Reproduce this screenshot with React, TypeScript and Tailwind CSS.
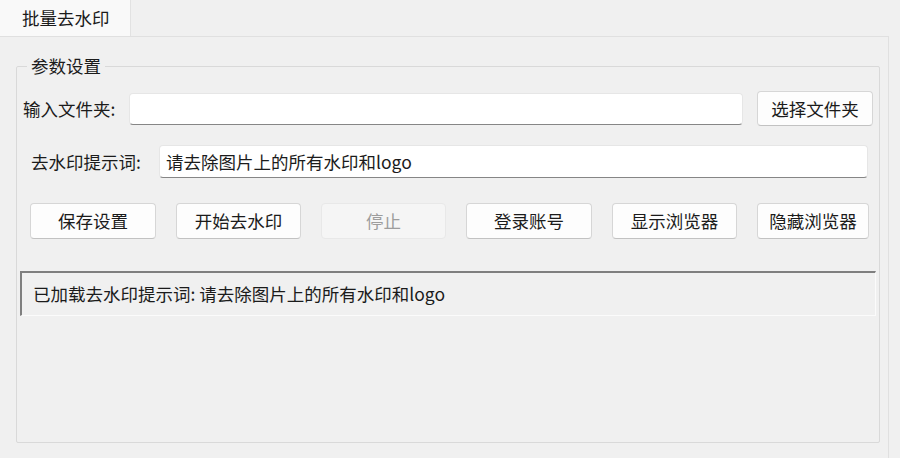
import React from 'react';

const font = { fontFamily: '"Microsoft YaHei", "Noto Sans CJK SC", "Noto Sans", sans-serif' };

// Qt-style push button
const Btn = ({ label, w, disabled }: { label: string; w: string; disabled?: boolean }) => (
  <button
    type="button"
    disabled={disabled}
    className={
      disabled
        ? `${w} h-full rounded-[4px] border border-[#e8e8e8] bg-[#f5f5f5] text-[#9d9d9d] leading-none`
        : `${w} h-full rounded-[4px] border border-[#d6d6d6] border-b-[#c2c2c2] bg-[#fdfdfd] text-[#1b1b1b] leading-none`
    }
  >
    {label}
  </button>
);

export default function App() {
  return (
    <div
      className="w-[900px] h-[458px] overflow-hidden bg-[#f0f0f0] text-[17.5px] text-[#1b1b1b] leading-none"
      style={font}
    >
      {/* tab bar */}
      <div className="flex h-[36px]">
        <div className="w-[131px] h-full flex items-center pl-[22px] bg-[#f9f9f9] border-r border-[#e2e2e2]">
          批量去水印
        </div>
      </div>

      {/* tab pane */}
      <div className="w-[889px] h-[422px] border-t border-r border-[#e0e0e0] pl-[16px] pt-[17px]">
        <fieldset className="w-[864px] h-[389px] border border-[#d9d9d9] rounded-[2px]">
          <legend className="ml-[10px] px-[4px] h-[24px] leading-[24px]">参数设置</legend>

          {/* 输入文件夹 */}
          <div className="mt-[13px] h-[35px] flex items-center pl-[6px] pr-[6px]">
            <span className="w-[106px] shrink-0">输入文件夹:</span>
            <div className="flex-1 h-[32px] bg-white rounded-[4px] border border-[#e6e6e6] border-b-[#868686]" />
            <div className="ml-[14px] h-full">
              <Btn label="选择文件夹" w="w-[116px]" />
            </div>
          </div>

          {/* 提示词 */}
          <div className="mt-[19px] h-[33px] flex items-center pl-[14px] pr-[11px]">
            <span className="w-[128px] shrink-0">去水印提示词:</span>
            <div className="flex-1 h-full flex items-center pl-[6px] bg-white rounded-[4px] border border-[#e6e6e6] border-b-[#868686]">
              请去除图片上的所有水印和logo
            </div>
          </div>

          {/* 操作按钮 */}
          <div className="mt-[25px] h-[36px] flex gap-5 pl-[13px]">
            <Btn label="保存设置" w="w-[126px]" />
            <Btn label="开始去水印" w="w-[125px]" />
            <Btn label="停止" w="w-[125px]" disabled />
            <Btn label="登录账号" w="w-[126px]" />
            <Btn label="显示浏览器" w="w-[125px]" />
            <Btn label="隐藏浏览器" w="w-[112px]" />
          </div>

          {/* 状态 */}
          <div className="mt-[32px] mx-[3px] h-[45px] flex items-center pl-[11px] bg-[#f0f0f0] border-t-2 border-l-2 border-t-[#7f7f7f] border-l-[#7f7f7f] border-r border-b border-r-[#fbfbfb] border-b-[#fbfbfb]">
            已加载去水印提示词: 请去除图片上的所有水印和logo
          </div>
        </fieldset>
      </div>
    </div>
  );
}
